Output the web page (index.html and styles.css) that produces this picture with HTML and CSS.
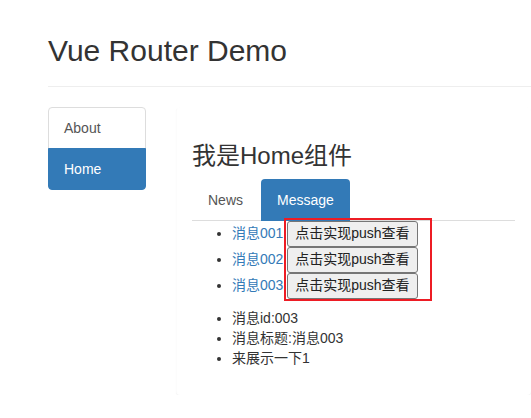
FILE: index.html
```html
<!DOCTYPE html>
<html lang="zh-CN">
	<head>
		<meta charset="UTF-8">
		<title>Vue Router Demo</title>
		<link rel="stylesheet" href="styles.css">
	</head>
	<body>
		<div class="app">
			<div class="page-header"><h2>Vue Router Demo</h2></div>

			<div class="main">
				<div class="list-group">
					<a class="list-group-item" href="#/about">About</a>
					<a class="list-group-item active" href="#/home">Home</a>
				</div>

				<div class="panel">
					<div class="panel-body">
						<h3>我是Home组件</h3>
						<ul class="nav-tabs">
							<li><a href="#/home/news">News</a></li>
							<li><a class="active" href="#/home/message">Message</a></li>
						</ul>

						<div class="msg-wrap">
							<ul class="msg-list">
								<li><a href="#/home/message/detail/001">消息001</a> <button>点击实现push查看</button></li>
								<li><a href="#/home/message/detail/002">消息002</a> <button>点击实现push查看</button></li>
								<li><a href="#/home/message/detail/003">消息003</a> <button>点击实现push查看</button></li>
							</ul>
							<div class="mark"></div>
						</div>

						<ul class="detail">
							<li>消息id:003</li>
							<li>消息标题:消息003</li>
							<li>来展示一下1</li>
						</ul>
					</div>
				</div>
			</div>
		</div>
	</body>
</html>
```

FILE: styles.css
```css
html {
	font-family: "Liberation Sans", "Noto Sans CJK SC", sans-serif;
}
body {
	margin: 0;
	font-size: 14px;
	line-height: 1.42857;
	color: #333;
	background: #fff;
	overflow: hidden;
}
a { color: #337ab7; text-decoration: none; }

.app { padding-top: 14px; }

.page-header {
	margin: 0 0 20px 48px;
	padding-bottom: 9px;
	border-bottom: 1px solid #eee;
}
h2 {
	margin: 20px 0 10px;
	font-size: 30px;
	font-weight: 400;
	line-height: 1.1;
}
h3 {
	margin: 20px 0 10px;
	font-size: 24px;
	font-weight: 400;
	line-height: 1.1;
}

.main {
	display: flex;
	align-items: flex-start;
	padding-left: 48px;
}

/* left menu */
.list-group {
	width: 98px;
	margin-right: 30px;
	flex: none;
}
.list-group-item {
	display: block;
	padding: 10px 15px;
	margin-bottom: -1px;
	line-height: 20px;
	color: #555;
	border: 1px solid #ddd;
}
.list-group-item:first-child { border-radius: 4px 4px 0 0; }
.list-group-item:last-child { border-radius: 0 0 4px 4px; }
.list-group-item.active {
	color: #fff;
	background: #337ab7;
	border-color: #337ab7;
}

/* right panel */
.panel {
	flex: 1;
	background: #fff;
	border: 1px solid transparent;
	border-left-color: #fcfcfc;
	border-radius: 4px;
	box-shadow: 0 1px 1px rgba(0, 0, 0, .05);
}
.panel-body { padding: 15px; }

.nav-tabs {
	display: flex;
	margin: 0;
	padding: 0;
	list-style: none;
	border-bottom: 1px solid #ddd;
}
.nav-tabs li { margin-bottom: -1px; }
.nav-tabs a {
	display: block;
	margin-right: 2px;
	padding: 10px 15px;
	line-height: 20px;
	color: #555;
	border: 1px solid transparent;
	border-radius: 4px 4px 0 0;
}
.nav-tabs a.active {
	color: #fff;
	background: #337ab7;
}

ul {
	margin: 0 0 10px;
	padding-left: 40px;
}

.msg-wrap { position: relative; }
.msg-list button {
	font: inherit;
	line-height: inherit;
	color: #222;
	margin: 0;
	padding: 2px 7px;
	background: #efefef;
	border: 1px solid #767676;
	border-radius: 3px;
}

/* red annotation frame drawn over the buttons */
.mark {
	position: absolute;
	left: 92px;
	top: -3px;
	width: 148px;
	height: 83px;
	box-sizing: border-box;
	border: 2px solid #ed1c24;
}
```
